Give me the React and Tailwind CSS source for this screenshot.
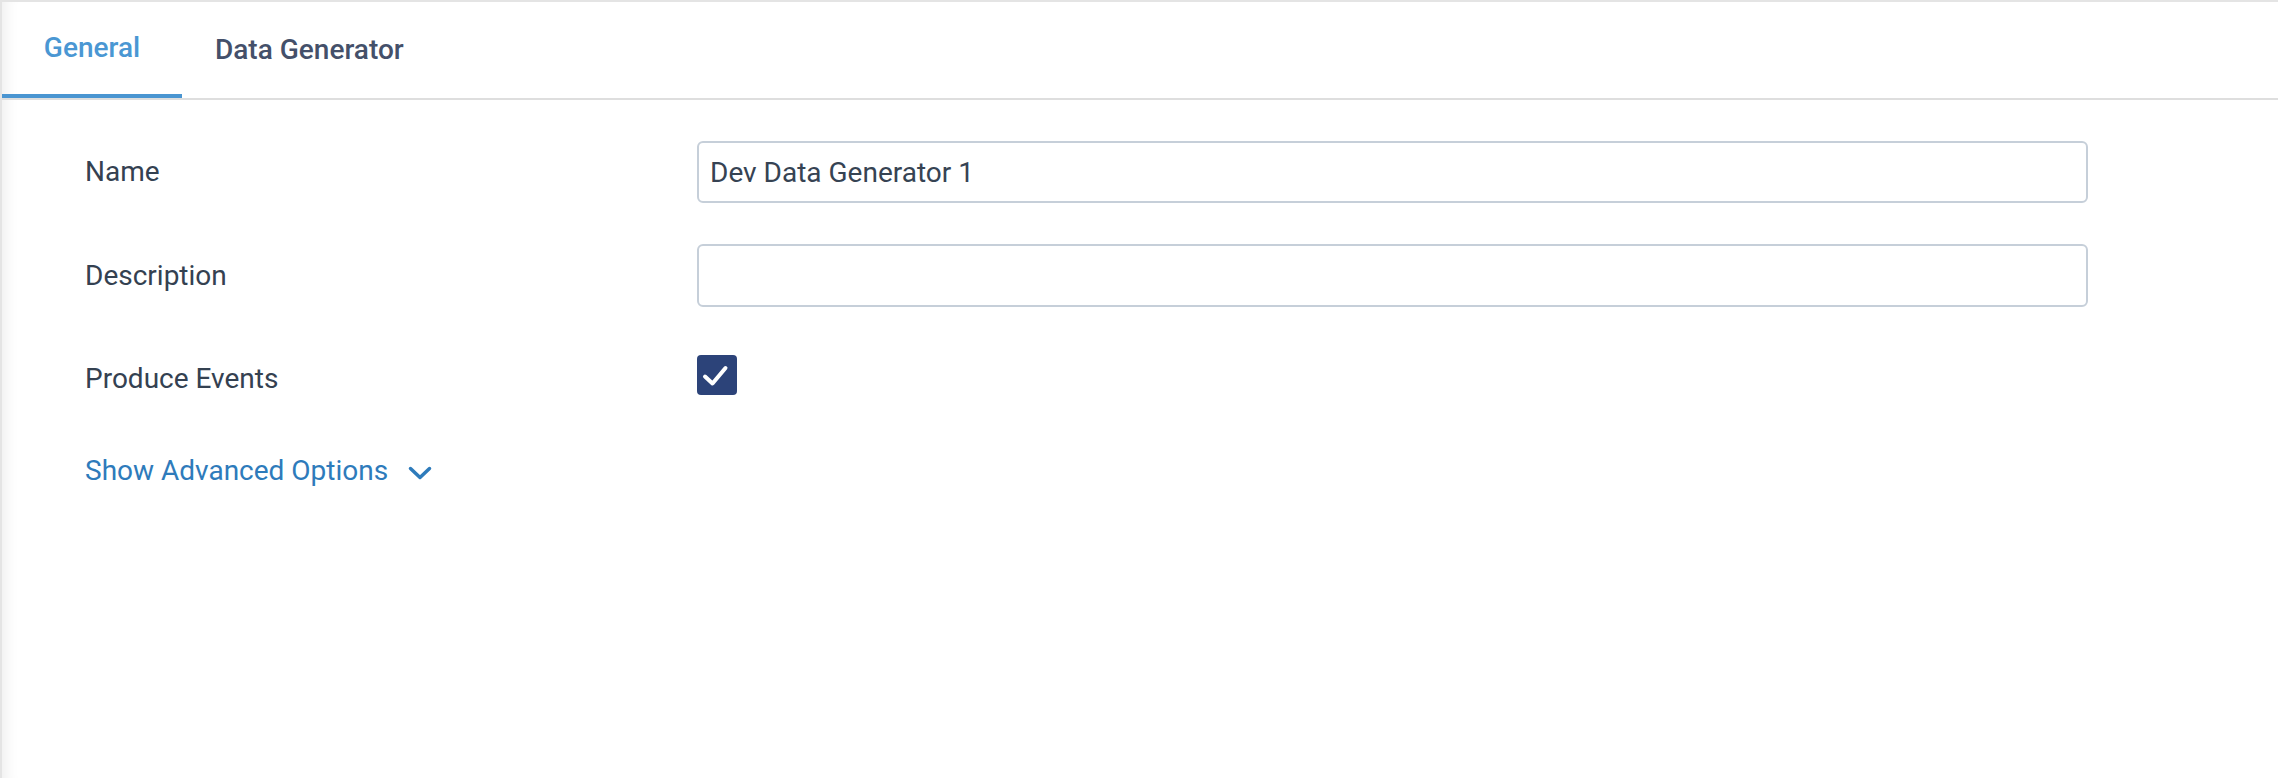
import React from "react";

const CheckIcon = (props) => (
  <svg {...props} viewBox="0 0 40 40" fill="none" stroke="currentColor" strokeWidth="4" strokeLinecap="round" strokeLinejoin="round">
    <path d="M8 21.5l7.5 7 13-15.5" />
  </svg>
);

const ChevronDown = (props) => (
  <svg {...props} viewBox="0 0 24 14" fill="none" stroke="currentColor" strokeWidth="3.5" strokeLinecap="round" strokeLinejoin="round">
    <path d="M2.5 2.5l9.5 9 9.5-9" />
  </svg>
);

function Field({ label, children, className, labelClass = "" }) {
  return (
    <div className={"flex items-center " + className}>
      <div className={"w-[612px] shrink-0 text-[28px] text-[#344151] " + labelClass}>{label}</div>
      <div className="flex-1">{children}</div>
    </div>
  );
}

export default function App() {
  return (
    <div
      className="h-[778px] w-full bg-white border-t-2 border-l-2 border-[#e4e4e4] shadow-[inset_16px_0_14px_-12px_rgba(0,0,0,0.07)]"
      style={{ fontFamily: "Roboto, 'Liberation Sans', sans-serif" }}
    >
      {/* Tabs */}
      <div className="flex border-b-2 border-[#dedede]">
        <div className="w-[180px] h-[96px] flex items-center justify-center border-b-4 border-[#4a95d1] text-[28px] font-medium text-[#4a97d3]">
          General
        </div>
        <div className="h-[96px] pl-[33px] pr-[42px] flex items-center text-[28px] font-medium text-[#44506a]">
          Data Generator
        </div>
      </div>

      {/* Form */}
      <div className="pt-[41px] pl-[83px] pr-[190px]">
        <Field label="Name" className="h-[62px] mb-[41px]">
          <input
            defaultValue="Dev Data Generator 1"
            className="w-full h-[62px] px-[11px] border-2 border-[#c6cfd9] rounded-[6px] text-[28px] text-[#364353] outline-none"
          />
        </Field>
        <Field label="Description" className="h-[63px] mb-[37px]">
          <input className="w-full h-[63px] px-[11px] border-2 border-[#c6cfd9] rounded-[6px] text-[28px] text-[#364353] outline-none" />
        </Field>
        <Field label="Produce Events" className="h-[62px] mb-[34px]" labelClass="pt-[8px]">
          <div className="w-[40px] h-[40px] rounded-[4px] bg-[#2c4379] text-white flex items-center justify-center">
            <CheckIcon className="w-[40px] h-[40px]" />
          </div>
        </Field>
        <div className="h-[62px] flex items-center text-[28px] text-[#2e7bbb]">
          <span>Show Advanced Options</span>
          <ChevronDown className="w-[24px] h-[14px] ml-[20px] mt-[4px]" />
        </div>
      </div>
    </div>
  );
}
